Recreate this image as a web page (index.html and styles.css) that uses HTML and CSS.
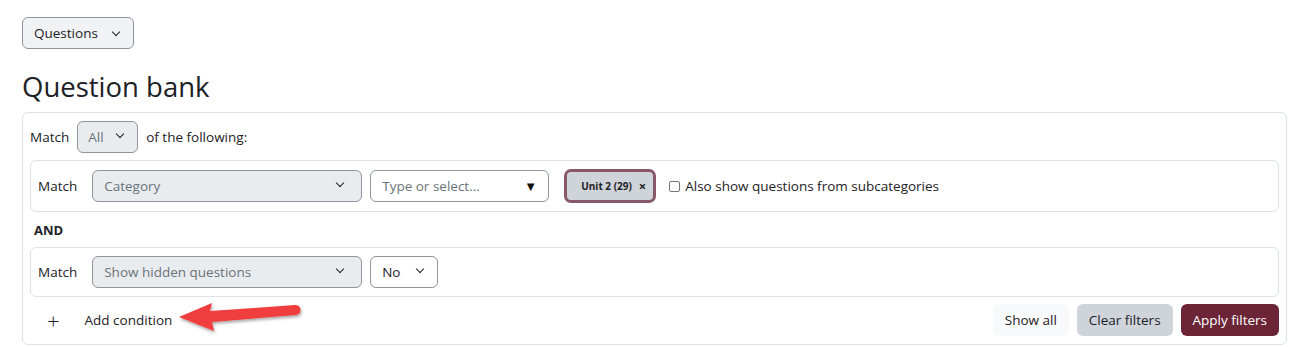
FILE: index.html
```html
<!DOCTYPE html>
<html lang="en">
<head>
    <meta charset="UTF-8">
    <title>Question bank</title>
    <link rel="stylesheet" href="styles.css">
</head>
<body>
    <div class="page">
        <button class="btn-nav">Questions <span class="chev"></span></button>

        <h2 class="title">Question bank</h2>

        <div class="filters">
            <div class="match-row">
                <span>Match</span>
                <div class="select small">All <span class="chev"></span></div>
                <span>of the following:</span>
            </div>

            <div class="condition">
                <span class="label">Match</span>
                <div class="select wide">Category <span class="chev"></span></div>
                <div class="combo">Type or select... <span class="tri">&#9660;</span></div>
                <div class="chip">Unit 2 (29) <span class="x">&times;</span></div>
                <label class="check"><span class="box"></span>Also show questions from subcategories</label>
            </div>

            <div class="join">AND</div>

            <div class="condition">
                <span class="label">Match</span>
                <div class="select wide">Show hidden questions <span class="chev"></span></div>
                <div class="select no">No <span class="chev"></span></div>
            </div>

            <div class="actions">
                <div class="add">
                    <span class="plus">+</span>
                    <span>Add condition</span>
                    <svg class="arrow" width="130" height="40" viewBox="0 0 130 40">
                        <defs>
                            <filter id="sh" x="-20%" y="-40%" width="140%" height="180%">
                                <feDropShadow dx="1" dy="2" stdDeviation="1.5" flood-color="#000" flood-opacity="0.35"/>
                            </filter>
                        </defs>
                        <g filter="url(#sh)" fill="#f03c3c">
                            <path d="M2 19 L35 5 L33 13 L118 7 A5 5 0 0 1 119 17 L35 24 L37 33 Z"/>
                        </g>
                    </svg>
                </div>
                <div class="buttons">
                    <button class="btn light">Show all</button>
                    <button class="btn grey">Clear filters</button>
                    <button class="btn primary">Apply filters</button>
                </div>
            </div>
        </div>
    </div>
</body>
</html>
```

FILE: styles.css
```css
body {
    margin: 0;
    font-family: 'Open Sans', 'Noto Sans', sans-serif;
    font-size: 13.5px;
    color: #1d2125;
    background: #fff;
}

.page {
    padding: 17px 11px 0 22px;
}

.chev {
    display: inline-block;
    width: 5px;
    height: 5px;
    border-right: 1.5px solid #1d2125;
    border-bottom: 1.5px solid #1d2125;
    transform: rotate(45deg);
    margin-left: 12px;
    position: relative;
    top: -3px;
}

.btn-nav {
    font-family: inherit;
    font-size: 13.5px;
    color: #1d2125;
    height: 32px;
    padding: 0 14px 0 11px;
    background: #f0f2f5;
    border: 1px solid #8f959e;
    border-radius: 6px;
}

.title {
    font-size: 27.5px;
    font-weight: 400;
    margin: 20px 0 7px;
    line-height: 36px;
}

.filters {
    border: 1px solid #dee2e6;
    border-radius: 6px;
    padding: 7px 7px 8px 7px;
}

.match-row {
    display: flex;
    align-items: center;
    gap: 8px;
    height: 33px;
    margin-bottom: 7px;
}

.select {
    display: flex;
    align-items: center;
    justify-content: space-between;
    box-sizing: border-box;
    height: 32px;
    padding: 0 18px 0 11px;
    background: #e9ecef;
    border: 1px solid #8f959e;
    border-radius: 6px;
    color: #6a737b;
}

.select.small {
    width: 61px;
    padding-left: 10px;
    padding-right: 14px;
}

.select.wide {
    width: 270px;
}

.select.no {
    width: 68px;
    margin-left: 8px;
    background: #fff;
    color: #1d2125;
    padding-right: 14px;
}

.condition {
    display: flex;
    align-items: center;
    border: 1px solid #dee2e6;
    border-radius: 6px;
    padding: 8px 7px;
}

.condition .label {
    margin-right: 15px;
}

.combo {
    display: flex;
    align-items: center;
    justify-content: space-between;
    box-sizing: border-box;
    width: 179px;
    height: 32px;
    margin-left: 8px;
    padding: 0 11px;
    border: 1px solid #8f959e;
    border-radius: 6px;
    color: #6a737b;
}

.tri {
    color: #111;
    font-size: 13px;
}

.chip {
    box-sizing: border-box;
    display: flex;
    align-items: center;
    width: 92px;
    height: 34px;
    margin-left: 15px;
    padding: 0 0 0 14px;
    background: #ced4da;
    border: 3px solid #87586a;
    border-radius: 7px;
    font-size: 10px;
    font-weight: 700;
    color: #1d2125;
}

.chip .x {
    margin-left: 7px;
    font-size: 13px;
}

.check {
    display: flex;
    align-items: center;
    margin-left: 13px;
}

.check .box {
    width: 9px;
    height: 9px;
    border: 1px solid #767676;
    border-radius: 2px;
    margin-right: 5px;
}

.join {
    font-weight: 700;
    font-size: 13px;
    margin: 10px 0 9px 4px;
    line-height: 16px;
}

.actions {
    display: flex;
    justify-content: space-between;
    align-items: center;
    margin-top: 7px;
}

.add {
    display: flex;
    align-items: center;
    position: relative;
    padding-left: 17px;
}

.plus {
    font-size: 22px;
    font-weight: 300;
    margin-right: 25px;
    line-height: 1;
}

.arrow {
    position: absolute;
    left: 147px;
    top: -11px;
}

.buttons {
    display: flex;
    gap: 8px;
}

.btn {
    font-family: inherit;
    font-size: 13.5px;
    height: 32px;
    border: none;
    border-radius: 6px;
    padding: 0 12px;
    color: #1d2125;
}

.btn.light {
    background: #f8f9fa;
}

.btn.grey {
    background: #ced4da;
}

.btn.primary {
    background: #6b2537;
    color: #fff;
}
```
